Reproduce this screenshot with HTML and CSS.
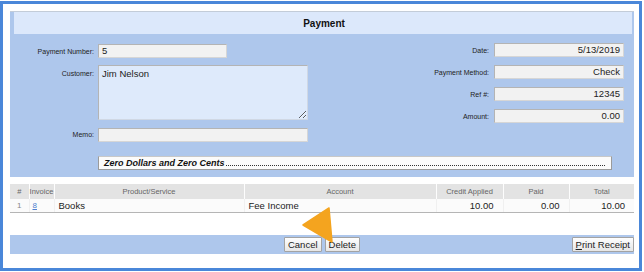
FILE: index.html
```html
<!DOCTYPE html>
<html>
<head>
<meta charset="utf-8">
<link rel="stylesheet" href="styles.css">
</head>
<body>
<div class="frame">
  <div class="panel">
    <div class="panel-head">Payment</div>
    <div class="panel-body">
      <div class="cols">
        <div class="left">
          <span class="lbl">Payment Number:</span><div class="field w-num">5</div>
          <span class="lbl lbl-top">Customer:</span><textarea class="ta" readonly>Jim Nelson</textarea>
          <span class="lbl lbl-memo">Memo:</span><div class="field w-memo lbl-memo"></div>
        </div>
        <div class="right">
          <span class="lbl">Date:</span><div class="field num">5/13/2019</div>
          <span class="lbl">Payment Method:</span><div class="field num">Check</div>
          <span class="lbl">Ref #:</span><div class="field num">12345</div>
          <span class="lbl">Amount:</span><div class="field num">0.00</div>
        </div>
      </div>
      <div class="words"><span class="words-text">Zero Dollars and Zero Cents</span><span class="leader"></span></div>
    </div>
  </div>

  <table class="lines">
    <colgroup>
      <col class="c-n"><col class="c-inv"><col class="c-prod"><col class="c-acc"><col class="c-cr"><col class="c-paid"><col class="c-tot">
    </colgroup>
    <thead>
      <tr><th>#</th><th>Invoice</th><th>Product/Service</th><th>Account</th><th>Credit Applied</th><th>Paid</th><th>Total</th></tr>
    </thead>
    <tbody>
      <tr><td class="idx">1</td><td class="inv"><a href="#">8</a></td><td>Books</td><td>Fee Income</td><td class="amt">10.00</td><td class="amt">0.00</td><td class="amt">10.00</td></tr>
    </tbody>
  </table>

  <div class="footer">
    <div></div>
    <div class="mid"><button class="btn">Cancel</button><button class="btn">Delete</button></div>
    <div class="end"><button class="btn"><u>P</u>rint Receipt</button></div>
  </div>

  <svg class="arrow" width="40" height="42" viewBox="0 0 40 42">
    <polygon points="3,20 29,3 32,37" fill="#f4a41f" stroke="#f4a41f" stroke-width="1.5" stroke-linejoin="round"/>
  </svg>
</div>
</body>
</html>
```
FILE: styles.css
```css
* { box-sizing: border-box; }
html, body { margin: 0; padding: 0; background: #fff; }
body { font-family: "Liberation Sans", Arial, sans-serif; }

.frame {
  position: relative;
  margin-top: 1px;
  width: 642px;
  height: 270px;
  border: 3px solid #4a87d9;
  background: #fff;
  padding: 7px 5px 0 7px;
}

.panel {
  background: #aec7ec;
  border-top: 1px solid #c3ccd8;
  width: 624px;
}
.panel-head {
  margin: 0 2px 0 4px;
  height: 22px;
  background: #dce8fb;
  font-size: 10px;
  font-weight: bold;
  color: #111;
  display: flex;
  align-items: center;
  justify-content: center;
  padding-left: 2px;
}
.panel-body {
  padding: 9px 10px 7px 0;
}
.cols {
  display: flex;
  justify-content: space-between;
}
.left {
  margin-top: 1px;
  display: grid;
  grid-template-columns: 84px 210px;
  grid-template-rows: 14px 55px 14px;
  column-gap: 4px;
  row-gap: 7px;
  align-items: center;
}
.right {
  display: grid;
  grid-template-columns: auto 130px;
  grid-auto-rows: 14px;
  column-gap: 5px;
  row-gap: 8px;
  align-items: center;
}
.lbl {
  font-size: 7px;
  color: #222;
  text-align: right;
  white-space: nowrap;
}
.lbl-top { align-self: start; padding-top: 5px; }
.lbl-memo { margin-top: 1px; }
.field {
  height: 14px;
  background: #f2f2f2;
  border: 1px solid;
  border-color: #b4b4b4 #d6d6d6 #d6d6d6 #b4b4b4;
  font-size: 9.5px;
  line-height: 12px;
  padding: 0 3px;
  color: #222;
  white-space: nowrap;
}
.w-num { width: 129px; }
.w-memo { width: 210px; }
.num { text-align: right; }
.ta {
  width: 210px;
  height: 55px;
  margin: 0;
  background: #deeafb;
  border: 1px solid;
  border-color: #b4b4b4 #d0d8e4 #d0d8e4 #b4b4b4;
  font-family: "Liberation Sans", Arial, sans-serif;
  font-size: 9.5px;
  line-height: 12px;
  padding: 2px 3px;
  color: #222;
  resize: both;
  overflow: hidden;
  outline: none;
}
.words {
  margin: 15px 0 0 88px;
  width: 514px;
  height: 14px;
  background: #fbfbfb;
  border: 1px solid #9b9b9b;
  border-top-color: #c8c8c8;
  font-size: 9px;
  font-weight: bold;
  font-style: italic;
  color: #111;
  line-height: 12px;
  padding: 0 6px 0 5px;
  display: flex;
  align-items: baseline;
  white-space: nowrap;
}
.leader {
  flex: 1;
  height: 9px;
  margin-left: 1px;
  border-bottom: 1px dotted #333;
}

.lines {
  margin-top: 7px;
  width: 624px;
  border-collapse: collapse;
  table-layout: fixed;
  font-size: 9.5px;
}
.c-n { width: 19px; }
.c-inv { width: 25px; }
.c-prod { width: 190px; }
.c-acc { width: 192px; }
.c-cr { width: 67px; }
.c-paid { width: 66px; }
.c-tot { width: 65px; }
.lines th {
  height: 15px;
  padding: 0;
  background: #e3e3e3;
  border-left: 1px solid #fdfdfd;
  font-weight: normal;
  font-size: 7.5px;
  color: #666;
  text-align: center;
}
.lines th:first-child { border-left: none; }
.lines td {
  height: 13px;
  padding: 0 0 0 4px;
  background: #fbfbfb;
  border-bottom: 1px solid #b5b5b5;
  border-left: 1px solid #f0f0f0;
  color: #222;
  white-space: nowrap;
}
.lines td:first-child { border-left: none; }
.lines td.idx { text-align: center; padding: 0; color: #888; font-size: 8px; }
.lines td.inv { padding-left: 3px; font-size: 8px; }
.lines td.inv a { color: #4f7fd0; }
.lines td.amt { text-align: right; padding: 0 9px 0 0; }

.footer {
  margin-top: 22px;
  width: 624px;
  height: 19px;
  background: #aec7ec;
  display: grid;
  grid-template-columns: 1fr auto 1fr;
  align-items: center;
}
.mid { display: flex; gap: 3px; }
.end { display: flex; justify-content: flex-end; }
.btn {
  height: 15px;
  margin: 0;
  padding: 0 3px;
  font-family: "Liberation Sans", Arial, sans-serif;
  font-size: 9.5px;
  line-height: 13px;
  color: #222;
  background: linear-gradient(#fefefe, #e6e6e6);
  border: 1px solid #a3a3a3;
  border-radius: 1px;
}

.arrow {
  position: absolute;
  left: 297px;
  top: 201px;
}
```
